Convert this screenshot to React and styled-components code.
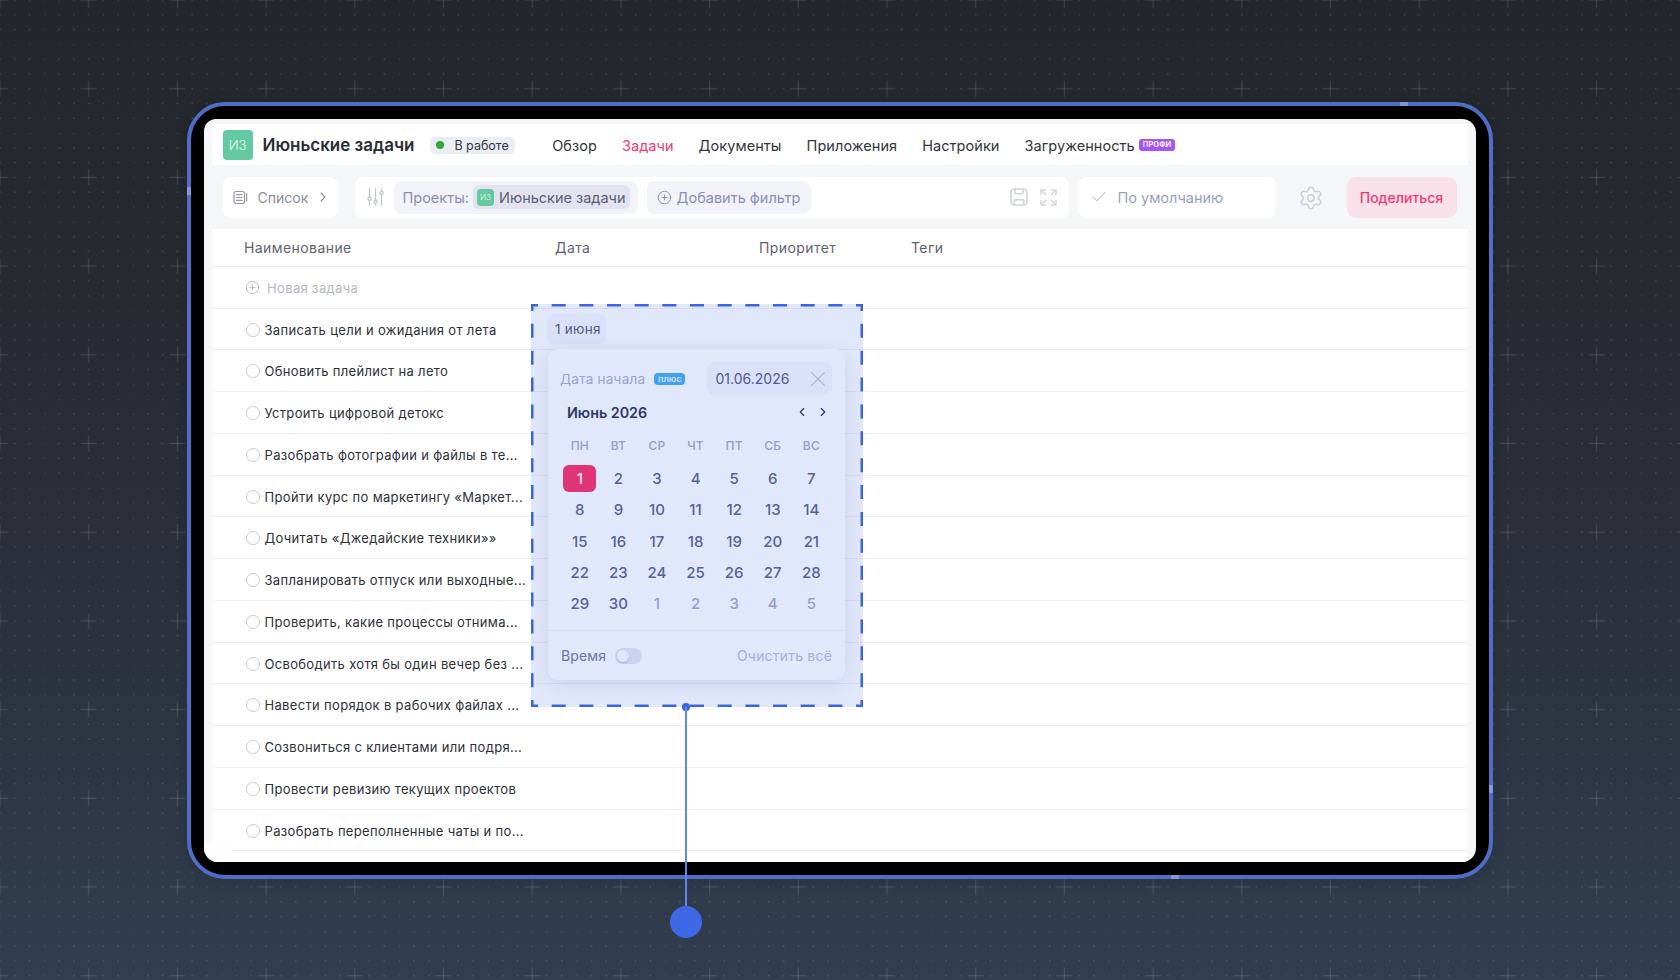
import styled, { createGlobalStyle } from "styled-components";
import { Check, ChevronLeft, ChevronRight, CirclePlus, Settings, X } from "lucide-react";

const GlobalStyle = createGlobalStyle`
  html, body {
    margin: 0;
    height: 980px;
    overflow: hidden;
    font-family: Inter, "Noto Sans", sans-serif;
    -webkit-font-smoothing: antialiased;
  }
  * {
    box-sizing: border-box;
  }
`;

const Page = styled.div`
  position: relative;
  width: 1680px;
  height: 980px;
  padding: 102px 187px 0;
  background: linear-gradient(180deg, #24262c 0%, #272a31 30%, #2c3340 70%, #313e50 100%);
  overflow: hidden;
`;

const Backdrop = styled.svg`
  position: absolute;
  inset: 0;
  width: 1680px;
  height: 980px;
`;

const Frame = styled.div`
  position: relative;
  width: 1306px;
  height: 777px;
  padding: 13px;
  background: #000;
  border: 4px solid #4e6ec6;
  border-radius: 38px;
  box-shadow: 0 2px 14px rgba(0, 0, 0, 0.16);
`;

const Glint = styled.span`
  position: absolute;
  background: #8497d6;
  ${(p) => p.$side}: -4px;
  ${(p) => (p.$side === "top" || p.$side === "bottom" ? `left: ${p.$at}px; width: 8px; height: 4px;` : `top: ${p.$at}px; width: 4px; height: 8px;`)}
`;

const Screen = styled.div`
  position: relative;
  display: flex;
  flex-direction: column;
  height: 743px;
  padding: 5px 8px 0;
  background: #f5f6f8;
  border-radius: 12px 14px 14px 14px;
  overflow: hidden;
`;

const CornerPatch = styled.span`
  position: absolute;
  left: 0;
  bottom: 0;
  width: 28px;
  height: 21px;
  background: #fdfdfd;
`;

const Header = styled.header`
  display: flex;
  align-items: center;
  flex: 0 0 41px;
  padding: 1px 0 0 10.5px;
  background: #fff;
`;

const Logo = styled.span`
  display: flex;
  align-items: center;
  justify-content: center;
  flex: none;
  width: ${(p) => p.$size}px;
  height: ${(p) => p.$size}px;
  background: #62c9a0;
  border-radius: 4px;
  color: #e8f8f1;
  font-size: ${(p) => p.$font}px;
  font-weight: 300;
`;

const Title = styled.h1`
  margin: 0 16px 0 10px;
  color: #2a2c33;
  font-size: 17px;
  font-weight: 600;
  line-height: 1;
  white-space: nowrap;
`;

const Status = styled.span`
  display: flex;
  align-items: center;
  gap: 10px;
  height: 17px;
  padding: 0 6px;
  background: #ebedf5;
  border-radius: 5px;
  color: #33353d;
  font-size: 12.5px;
  white-space: nowrap;
`;

const StatusDot = styled.i`
  width: 8px;
  height: 8px;
  background: #2ea836;
  border-radius: 50%;
`;

const Nav = styled.nav`
  display: flex;
  align-items: center;
  gap: 25px;
  margin-left: 37.5px;
`;

const NavItem = styled.a`
  display: flex;
  align-items: center;
  gap: 4px;
  color: ${(p) => (p.$active ? "#f23a72" : "#33353d")};
  font-size: 14.5px;
  letter-spacing: 0.06px;
  white-space: nowrap;
`;

const ProBadge = styled.span`
  padding: 0 4px;
  height: 12px;
  line-height: 12px;
  background: #a455f4;
  border-radius: 3px;
  color: #fff;
  font-size: 7.5px;
  font-weight: 600;
  text-transform: uppercase;
`;

const Toolbar = styled.div`
  display: flex;
  align-items: center;
  flex: 0 0 64px;
  padding: 0 10.5px;
`;

const Card = styled.div`
  display: flex;
  align-items: center;
  flex: none;
  width: ${(p) => p.$width}px;
  height: 41px;
  margin-right: ${(p) => p.$after}px;
  padding-left: ${(p) => p.$pad}px;
  padding-right: ${(p) => p.$padRight ?? p.$pad}px;
  background: #fff;
  border-radius: 8px;
  svg {
    flex: none;
  }
`;

const MutedText = styled.span`
  color: ${(p) => p.$color || "#8a8d9c"};
  font-size: 14.5px;
  white-space: nowrap;
`;

const ListLabel = styled(MutedText)`
  margin: 0 7px 0 10px;
  font-size: 14px;
`;

const ViewLabel = styled(MutedText)`
  margin-left: 10px;
`;

const FilterChip = styled.div`
  display: flex;
  align-items: center;
  height: 33px;
  padding: 0 ${(p) => p.$right ?? p.$pad}px 0 ${(p) => p.$pad}px;
  margin-left: ${(p) => p.$left}px;
  gap: ${(p) => p.$gap}px;
  background: #f2f3f8;
  border-radius: 8px;
`;

const ProjectTag = styled.span`
  display: flex;
  align-items: center;
  gap: 5px;
  height: 24px;
  padding: 0 4px;
  background: #e2e3ee;
  border-radius: 6px;
  color: #5c5f75;
  font-size: 14.5px;
  white-space: nowrap;
`;

const CardTail = styled.div`
  display: flex;
  align-items: center;
  gap: 12px;
  margin-left: auto;
`;

const GearSlot = styled.div`
  display: flex;
  align-items: center;
  justify-content: center;
  flex: none;
  width: 71px;
  padding: 1px 1px 0 0;
  color: #cbcdd7;
`;

const ShareButton = styled.button`
  flex: none;
  width: 110px;
  height: 41px;
  padding: 0;
  background: #f9e1e9;
  border: 0;
  border-radius: 9px;
  color: #f23a72;
  font: 500 14px Inter, sans-serif;
`;

const Table = styled.div`
  flex: 1;
  background: #fff;
`;

const Row = styled.div`
  display: grid;
  grid-template-columns: 343px 204px 152px 1fr;
  align-items: center;
  height: ${(p) => p.$height}px;
  border-bottom: 1px solid #eff0f4;
`;

const HeadCell = styled.span`
  padding-left: ${(p) => p.$pad || 0}px;
  color: #5f626d;
  font-size: 14px;
  letter-spacing: 0.42px;
`;

const NewTask = styled.div`
  display: flex;
  align-items: center;
  gap: 7px;
  padding: 1px 0 0 33px;
  color: #b4b7c7;
  font-size: 13px;
  letter-spacing: 0.36px;
  white-space: nowrap;
`;

const TaskName = styled.div`
  display: flex;
  align-items: center;
  gap: 5px;
  padding: 1px 0 0 33.5px;
  color: #2e3038;
  font-size: 13px;
  letter-spacing: 0.33px;
  white-space: nowrap;
`;

const TaskCircle = styled.i`
  flex: none;
  width: 14px;
  height: 14px;
  border: 1.5px solid #c9cbd6;
  border-radius: 50%;
`;

const DateChip = styled.span`
  display: inline-flex;
  align-items: center;
  height: 30px;
  margin-left: -8px;
  padding: 0 8px;
  width: 59px;
  background: #f5f6fb;
  border-radius: 6px;
  color: #555a6e;
  font-size: 13.5px;
  letter-spacing: 0.25px;
  white-space: nowrap;
`;

/* popover sits under the blue selection tint, so its colours are the untinted ones */
const Popover = styled.div`
  position: absolute;
  left: 357px;
  top: 243px;
  width: 297px;
  height: 331px;
  background: #fff;
  border-radius: 9px;
  box-shadow: 0 4px 18px rgba(50, 60, 110, 0.14);
`;

const PopoverTop = styled.div`
  display: flex;
  align-items: center;
  height: 33px;
  margin: 13px 13px 0 12px;
`;

const FieldLabel = styled.span`
  color: #a9aecd;
  font-size: 13.5px;
  letter-spacing: 0.25px;
  white-space: nowrap;
`;

const PlusBadge = styled.span`
  width: 31px;
  height: 12px;
  margin-left: 9px;
  background: #3faef9;
  border-radius: 4px;
  color: #fff;
  font-size: 9px;
  font-weight: 500;
  line-height: 12px;
  text-align: center;
`;

const DateField = styled.div`
  display: flex;
  align-items: center;
  justify-content: space-between;
  width: 125px;
  height: 33px;
  margin-left: auto;
  padding: 0 1px 0 8.5px;
  background: #f5f6fb;
  border-radius: 8px;
  color: #525a82;
  font-size: 14px;
`;

const FieldClear = styled.span`
  display: flex;
  color: #c3c7da;
`;

const MonthRow = styled.div`
  display: flex;
  align-items: center;
  justify-content: space-between;
  margin: 2px 15px 2px 19px;
  height: 30px;
  color: #2c3150;
  font-size: 14.3px;
  font-weight: 600;
`;

const MonthArrows = styled.div`
  display: flex;
  gap: 7px;
  color: #2c3150;
`;

const CalendarGrid = styled.div`
  display: grid;
  grid-template-columns: repeat(7, 38.6px);
  justify-items: center;
  align-items: center;
  margin: 0 0 0 12.5px;
`;

const Weekday = styled.span`
  display: flex;
  align-items: center;
  height: 34px;
  padding-bottom: 1px;
  color: #a2a8ca;
  font-size: 12px;
  font-weight: 500;
  letter-spacing: 0.2px;
`;

const Day = styled.span`
  display: flex;
  align-items: center;
  justify-content: center;
  width: 33px;
  height: 27px;
  margin: 2.15px 0;
  background: ${(p) => (p.$selected ? "#fc2d64" : "transparent")};
  border-radius: 6px;
  color: ${(p) => (p.$selected ? "#fff" : p.$outside ? "#a2a8ca" : "#5a628e")};
  font-size: 15px;
  font-weight: 500;
`;

const PopoverFooter = styled.div`
  display: flex;
  align-items: center;
  height: 51px;
  margin-top: 11px;
  padding: 0 13px 1px;
  border-top: 1px solid #f3f4fa;
`;

const TimeLabel = styled.span`
  color: #72779b;
  font-size: 14px;
  letter-spacing: 0.15px;
`;

const Toggle = styled.span`
  display: flex;
  align-items: center;
  width: 27px;
  height: 16px;
  margin-left: 9px;
  padding: 2px;
  background: #e6e7f2;
  border-radius: 8px;
`;

const ToggleKnob = styled.i`
  width: 12px;
  height: 12px;
  background: #fff;
  border-radius: 50%;
  box-shadow: 0 1px 2px rgba(50, 60, 110, 0.25);
`;

const ClearAll = styled.span`
  margin-left: auto;
  color: #b6bbd9;
  font-size: 14px;
  letter-spacing: 0.2px;
`;

const Selection = styled.div`
  position: absolute;
  left: 340px;
  top: 198px;
  width: 332px;
  height: 403px;
  background: rgba(58, 99, 230, 0.15);
`;

const DashedEdge = styled.svg`
  position: absolute;
  inset: 0;
  width: 100%;
  height: 100%;
`;

const Handle = styled.i`
  position: absolute;
  left: 151px;
  bottom: -4px;
  width: 8px;
  height: 8px;
  background: #3a63e6;
  border-radius: 50%;
`;

const Wire = styled.i`
  position: absolute;
  left: 494px;
  top: 601px;
  width: 2px;
  height: 203px;
  background: #6386ec;
`;

const Pin = styled.i`
  position: absolute;
  left: 479px;
  top: 800px;
  width: 32px;
  height: 32px;
  background: #3e68e6;
  border-radius: 50%;
`;

const tasks = [
  "Записать цели и ожидания от лета",
  "Обновить плейлист на лето",
  "Устроить цифровой детокс",
  "Разобрать фотографии и файлы в те...",
  "Пройти курс по маркетингу «Маркет...",
  "Дочитать «Джедайские техники»»",
  "Запланировать отпуск или выходные...",
  "Проверить, какие процессы отнима...",
  "Освободить хотя бы один вечер без ...",
  "Навести порядок в рабочих файлах ...",
  "Созвониться с клиентами или подря...",
  "Провести ревизию текущих проектов",
  "Разобрать переполненные чаты и по...",
];

const navItems = ["Обзор", "Задачи", "Документы", "Приложения", "Настройки"];
const weekdays = ["ПН", "ВТ", "СР", "ЧТ", "ПТ", "СБ", "ВС"];
const days = Array.from({ length: 30 }, (_, i) => i + 1);
const nextDays = [1, 2, 3, 4, 5];

const PITCH = 88.7;
const STEP = PITCH / 6;
const C = PITCH / 2;

const BackgroundPattern = () => {
  const dots = [];
  for (let ix = -3; ix < 3; ix++) {
    for (let iy = -3; iy < 3; iy++) {
      if (ix === 0 && iy === 0) continue;
      dots.push(<rect key={`${ix}-${iy}`} x={C + ix * STEP - 0.75} y={C + iy * STEP - 0.75} width="1.5" height="1.5" fill="#fff" fillOpacity="0.16" />);
    }
  }
  return (
    <Backdrop>
      <defs>
        <pattern id="grid" x={-C} y={-C} width={PITCH} height={PITCH} patternUnits="userSpaceOnUse">
          {dots}
          <rect x={C - 8} y={C - 0.65} width="16" height="1.3" fill="#fff" fillOpacity="0.12" />
          <rect x={C - 0.65} y={C - 8} width="1.3" height="16" fill="#fff" fillOpacity="0.12" />
        </pattern>
      </defs>
      <rect width="1680" height="980" fill="url(#grid)" />
    </Backdrop>
  );
};

const ListIcon = () => (
  <svg width="15" height="15" viewBox="0 0 15 15" fill="none" stroke="#9598a6" strokeWidth="1.2" strokeLinecap="round">
    <rect x="1" y="1.5" width="10.5" height="12" rx="2" />
    <path d="M3.5 4.6h5.5M3.5 7.5h5.5M3.5 10.4h5.5M13.6 3.5v7.5" />
  </svg>
);

const SlidersIcon = () => (
  <svg width="17" height="18" viewBox="0 0 17 18" fill="none" stroke="#c3c5cf" strokeWidth="1.3" strokeLinecap="round">
    <path d="M2.5 1v8.2M2.5 12.4V17M8.5 1v11M8.5 15.2V17M14.5 1v2.2M14.5 6.4V17" />
    <circle cx="2.5" cy="10.8" r="1.6" />
    <circle cx="8.5" cy="13.6" r="1.6" />
    <circle cx="14.5" cy="4.8" r="1.6" />
  </svg>
);

const SaveIcon = () => (
  <svg width="18" height="18" viewBox="0 0 18 18" fill="none" stroke="#d0d2dc" strokeWidth="1.6">
    <rect x="1" y="1" width="16" height="16" rx="3.5" />
    <path d="M5 1.2v3.6a1 1 0 0 0 1 1h6a1 1 0 0 0 1-1V1.2M4.2 16.8v-3.8a1.2 1.2 0 0 1 1.2-1.2h7.2a1.2 1.2 0 0 1 1.2 1.2v3.8" />
  </svg>
);

const ExpandIcon = () => (
  <svg width="17" height="17" viewBox="0 0 17 17" fill="none" stroke="#d6d8e0" strokeWidth="1.6">
    <path d="M1 6V1h5M1 1l5 5M16 6V1h-5M16 1l-5 5M1 11v5h5M1 16l5-5M16 11v5h-5M16 16l-5-5" />
  </svg>
);

export default function App() {
  return (
    <Page>
      <GlobalStyle />
      <BackgroundPattern />
      <Frame>
        <Glint $side="top" $at={1209} />
        <Glint $side="left" $at={81} />
        <Glint $side="right" $at={679} />
        <Glint $side="bottom" $at={980} />
        <Screen>
          <Header>
            <Logo $size={30} $font={13}>ИЗ</Logo>
            <Title>Июньские задачи</Title>
            <Status>
              <StatusDot />
              В работе
            </Status>
            <Nav>
              {navItems.map((item) => (
                <NavItem key={item} $active={item === "Задачи"}>{item}</NavItem>
              ))}
              <NavItem>
                Загруженность
                <ProBadge>профи</ProBadge>
              </NavItem>
            </Nav>
          </Header>
          <Toolbar>
            <Card $width={115} $after={17} $pad={10} $padRight={0}>
              <ListIcon />
              <ListLabel>Список</ListLabel>
              <ChevronRight size={16} color="#8a8d9c" strokeWidth={1.6} />
            </Card>
            <Card $width={714} $after={9} $pad={12}>
              <SlidersIcon />
              <FilterChip $left={10} $pad={9} $right={8} $gap={4}>
                <MutedText $color="#8a90b5">Проекты:</MutedText>
                <ProjectTag>
                  <Logo $size={17} $font={8}>ИЗ</Logo>
                  Июньские задачи
                </ProjectTag>
              </FilterChip>
              <FilterChip $left={9} $pad={10} $right={11} $gap={5}>
                <CirclePlus size={15} color="#8a90b5" strokeWidth={1.5} />
                <MutedText $color="#8a90b5">Добавить фильтр</MutedText>
              </FilterChip>
              <CardTail>
                <SaveIcon />
                <ExpandIcon />
              </CardTail>
            </Card>
            <Card $width={198} $after={0} $pad={12}>
              <Check size={18} color="#b9bccb" strokeWidth={1.4} />
              <ViewLabel $color="#9a9fc0">По умолчанию</ViewLabel>
            </Card>
            <GearSlot>
              <Settings size={26} strokeWidth={1.4} />
            </GearSlot>
            <ShareButton>Поделиться</ShareButton>
          </Toolbar>
          <Table>
            <Row $height={38}>
              <HeadCell $pad={32}>Наименование</HeadCell>
              <HeadCell>Дата</HeadCell>
              <HeadCell>Приоритет</HeadCell>
              <HeadCell>Теги</HeadCell>
            </Row>
            <Row $height={41.7}>
              <NewTask>
                <CirclePlus size={15} strokeWidth={1.4} />
                Новая задача
              </NewTask>
            </Row>
            {tasks.map((task, i) => (
              <Row key={task} $height={41.75}>
                <TaskName>
                  <TaskCircle />
                  {task}
                </TaskName>
                {i === 0 && (
                  <div>
                    <DateChip>1 июня</DateChip>
                  </div>
                )}
              </Row>
            ))}
          </Table>
          <CornerPatch />
        </Screen>
        <Popover>
          <PopoverTop>
            <FieldLabel>Дата начала</FieldLabel>
            <PlusBadge>плюс</PlusBadge>
            <DateField>
              01.06.2026
              <FieldClear>
                <X size={26} strokeWidth={1.1} />
              </FieldClear>
            </DateField>
          </PopoverTop>
          <MonthRow>
            Июнь 2026
            <MonthArrows>
              <ChevronLeft size={14} strokeWidth={2} />
              <ChevronRight size={14} strokeWidth={2} />
            </MonthArrows>
          </MonthRow>
          <CalendarGrid>
            {weekdays.map((d) => (
              <Weekday key={d}>{d}</Weekday>
            ))}
            {days.map((d) => (
              <Day key={d} $selected={d === 1}>{d}</Day>
            ))}
            {nextDays.map((d) => (
              <Day key={`next-${d}`} $outside>{d}</Day>
            ))}
          </CalendarGrid>
          <PopoverFooter>
            <TimeLabel>Время</TimeLabel>
            <Toggle>
              <ToggleKnob />
            </Toggle>
            <ClearAll>Очистить всё</ClearAll>
          </PopoverFooter>
        </Popover>
        <Selection>
          <DashedEdge>
            <g stroke="#3a63e6" strokeWidth="2.5" fill="none">
              <line x1="0" y1="1.25" x2="332" y2="1.25" strokeDasharray="14 13.67" strokeDashoffset="7" />
              <line x1="0" y1="401.75" x2="332" y2="401.75" strokeDasharray="14 13.67" strokeDashoffset="7" />
              <line x1="1.25" y1="0" x2="1.25" y2="403" strokeDasharray="14 12.87" strokeDashoffset="7" />
              <line x1="330.75" y1="0" x2="330.75" y2="403" strokeDasharray="14 12.87" strokeDashoffset="7" />
            </g>
          </DashedEdge>
          <Handle />
        </Selection>
        <Wire />
        <Pin />
      </Frame>
    </Page>
  );
}
